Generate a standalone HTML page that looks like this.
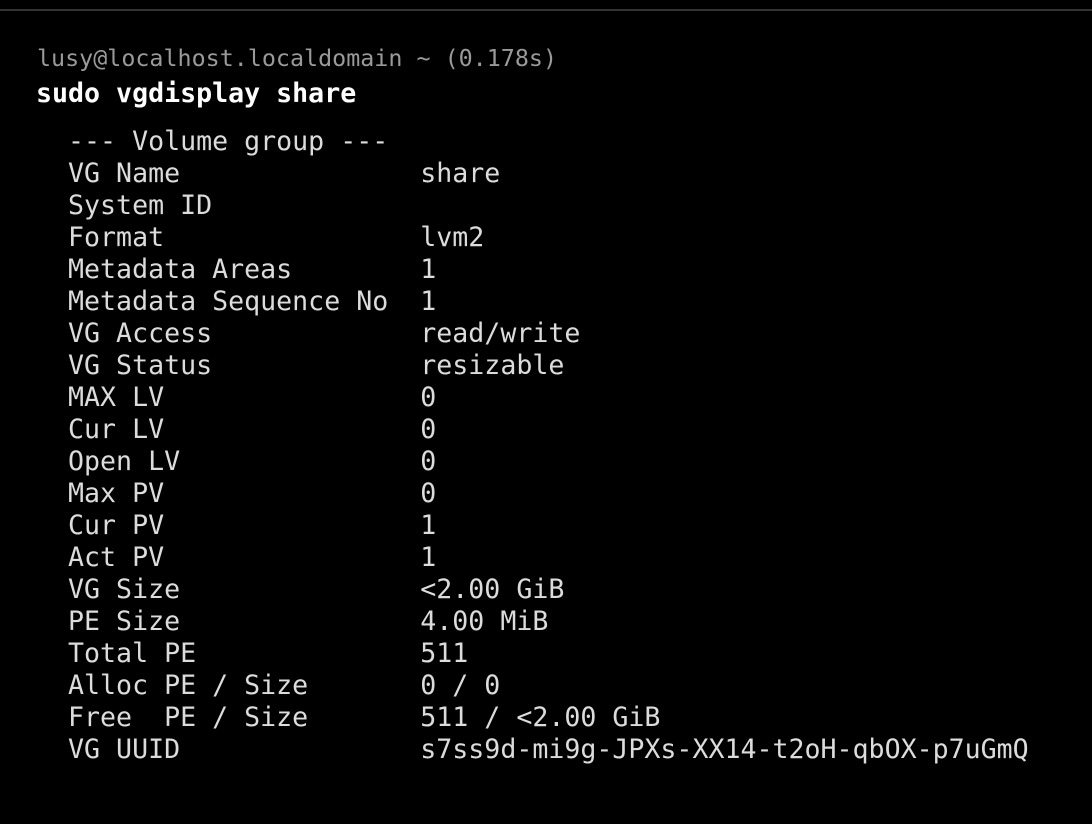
<!DOCTYPE html>
<html><head><style>
html,body{margin:0;padding:0;background:#000;width:1092px;height:824px;overflow:hidden}
.bar{position:absolute;left:0;top:9px;width:1092px;height:2px;background:#333}
.t{position:absolute;left:36px;font-family:"DejaVu Sans Mono","Liberation Mono",monospace;font-size:26.6px;line-height:32px;white-space:pre;margin:0}
.p{top:42px;left:37px;color:#9a9a9a;font-size:23.35px}
.c{top:78px;color:#fff;font-weight:bold}
.o{top:126px;color:#dcdcdc}
</style></head><body>
<div class="bar"></div>
<pre class="t p">lusy@localhost.localdomain ~ (0.178s)</pre>
<pre class="t c">sudo vgdisplay share</pre>
<pre class="t o">  --- Volume group ---
  VG Name               share
  System ID
  Format                lvm2
  Metadata Areas        1
  Metadata Sequence No  1
  VG Access             read/write
  VG Status             resizable
  MAX LV                0
  Cur LV                0
  Open LV               0
  Max PV                0
  Cur PV                1
  Act PV                1
  VG Size               &lt;2.00 GiB
  PE Size               4.00 MiB
  Total PE              511
  Alloc PE / Size       0 / 0
  Free  PE / Size       511 / &lt;2.00 GiB
  VG UUID               s7ss9d-mi9g-JPXs-XX14-t2oH-qbOX-p7uGmQ</pre>
</body></html>
